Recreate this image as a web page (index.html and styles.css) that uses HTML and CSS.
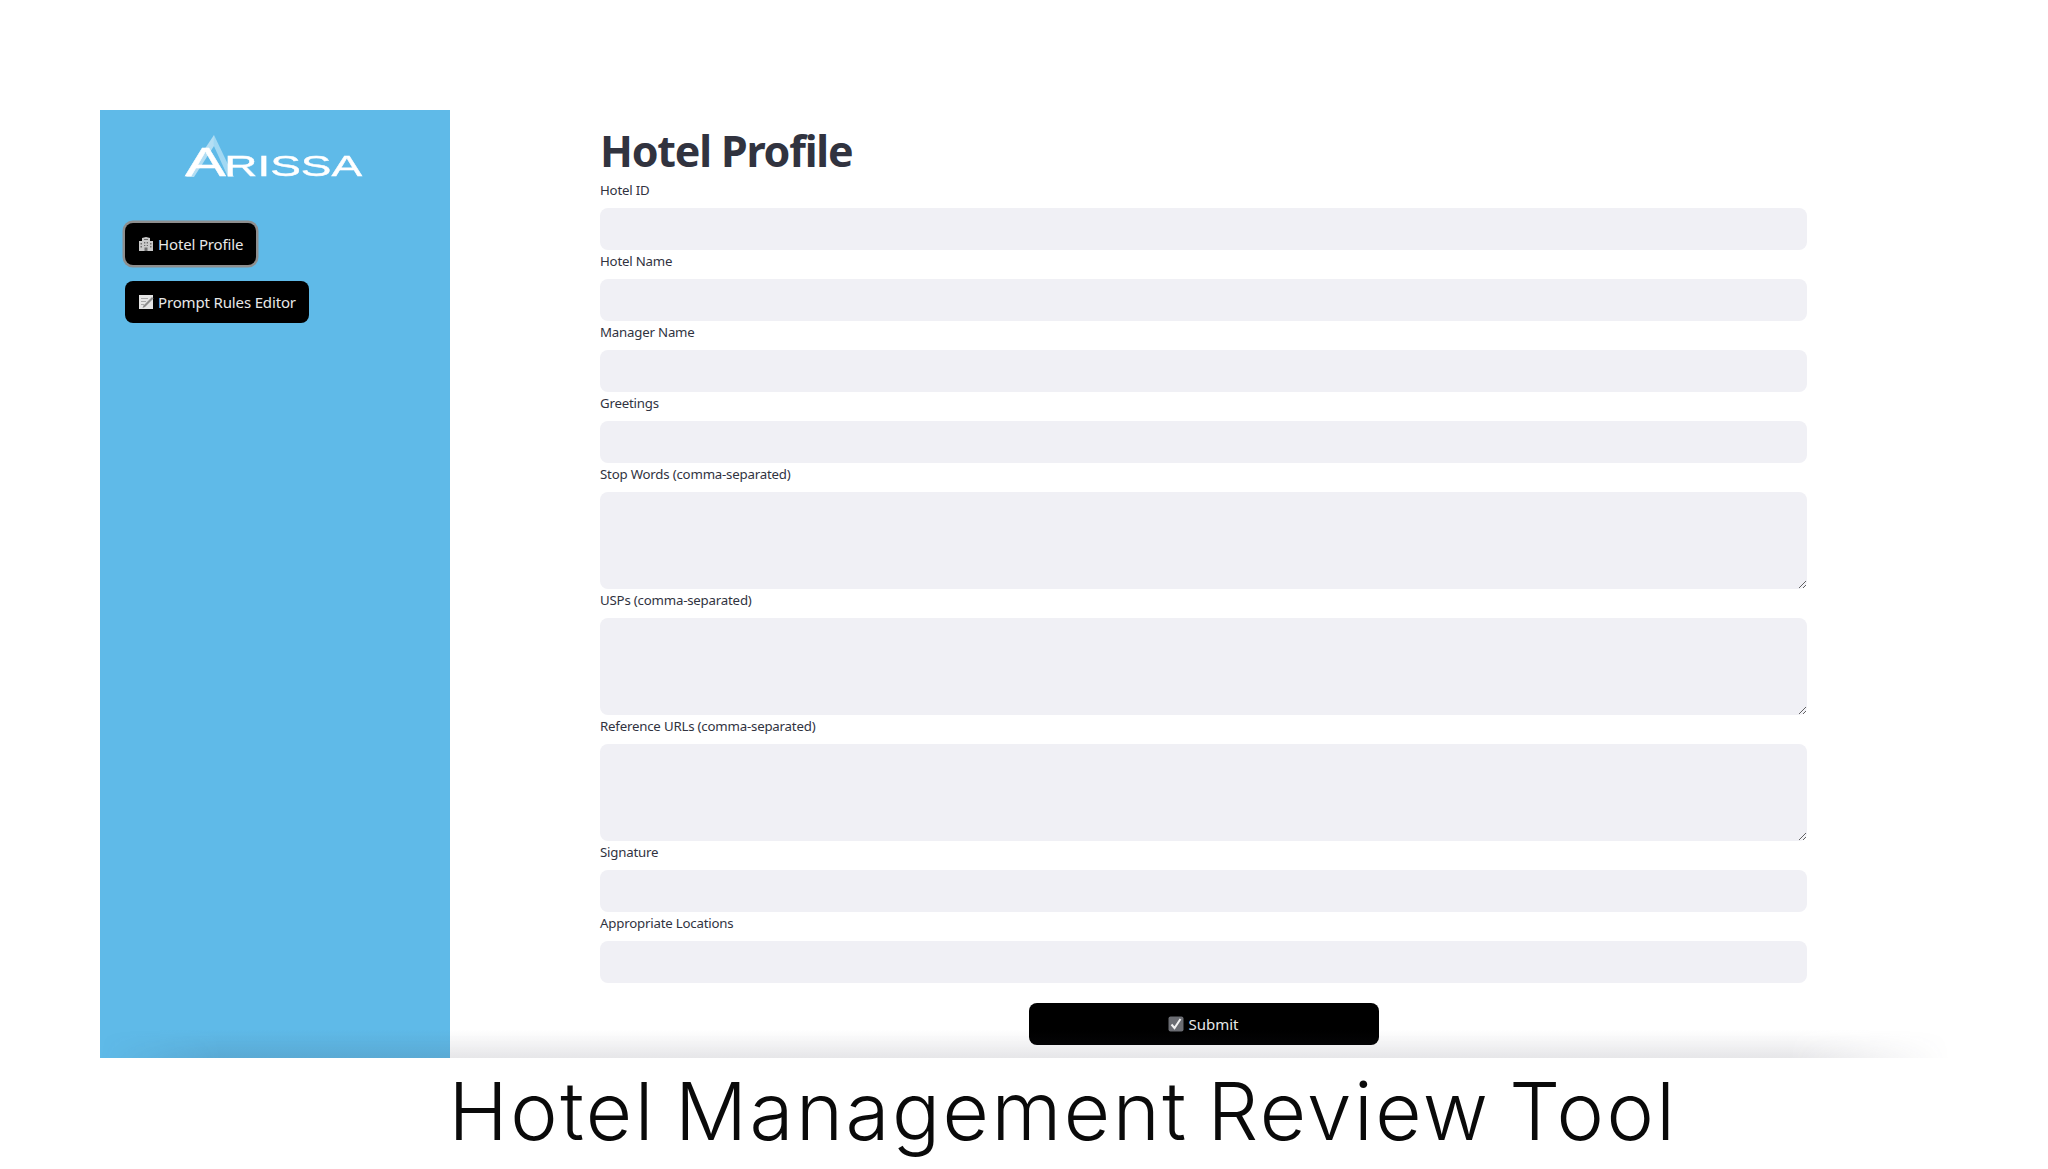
FILE: index.html
```html
<!DOCTYPE html>
<html lang="en">
<head>
<meta charset="utf-8">
<title>Hotel Management Review Tool</title>
<link rel="stylesheet" href="styles.css">
</head>
<body>
<div class="frame">
  <aside class="sidebar">
    <div class="logo">
      <svg class="logo-peak" width="60" height="44" viewBox="0 0 60 44" aria-hidden="true">
        <path d="M30 1 L2 43 L10 43 L30 12 Z" fill="#cfeaf8" opacity=".75"/>
        <path d="M30 1 L50 43 L44 43 L29 10 Z" fill="#a9dcf4" opacity=".9"/>
      </svg>
      <span class="logo-word"><span class="logo-cap">A</span>RISSA</span>
    </div>
    <nav class="nav">
      <button class="nav-btn is-active" type="button">
        <svg class="icon" viewBox="0 0 16 16" aria-hidden="true">
          <path fill="#c9c9c9" d="M1 5h3V2l4-1 4 1v3h3v10H1z"/>
          <path fill="#6f6f6f" d="M6 3h4v1H6zM2.500 7H4v1.500H2.500zM2.500 10H4v1.500H2.500zM12 7h1.500v1.500H12zM12 10h1.500v1.500H12zM6 6h1.300v1.500H6zM8.700 6H10v1.500H8.700zM6 9h1.300v1H6zM8.700 9H10v1H8.700zM6.500 11.500h3V15h-3z"/>
        </svg>
        Hotel Profile
      </button>
      <button class="nav-btn" type="button">
        <svg class="icon" viewBox="0 0 16 16" aria-hidden="true">
          <path fill="#e4e4e4" d="M1 1h14v14H1z"/>
          <path fill="#a8a8a8" d="M3 4h7v1H3zM3 7h5v1H3zM3 10h3v1H3z"/>
          <path fill="#8d8d8d" d="M14 3l1.500 1.500L7 13l-2.500 1 1-2.500z"/>
        </svg>
        Prompt Rules Editor
      </button>
    </nav>
  </aside>
  <main class="content">
    <h1 class="title">Hotel Profile</h1>
    <form class="form">
      <label class="field"><span class="label">Hotel ID</span><input class="input" type="text"></label>
      <label class="field"><span class="label">Hotel Name</span><input class="input" type="text"></label>
      <label class="field"><span class="label">Manager Name</span><input class="input" type="text"></label>
      <label class="field"><span class="label">Greetings</span><input class="input" type="text"></label>
      <label class="field"><span class="label">Stop Words (comma-separated)</span><textarea class="input area"></textarea></label>
      <label class="field"><span class="label">USPs (comma-separated)</span><textarea class="input area"></textarea></label>
      <label class="field"><span class="label">Reference URLs (comma-separated)</span><textarea class="input area"></textarea></label>
      <label class="field"><span class="label">Signature</span><input class="input" type="text"></label>
      <label class="field"><span class="label">Appropriate Locations</span><input class="input" type="text"></label>
      <button class="submit" type="button">
        <svg class="icon" viewBox="0 0 16 16" aria-hidden="true">
          <rect x="0.500" y="0.500" width="15" height="15" rx="2" fill="#6b6d73"/>
          <path d="M3.500 8.500l3 3.500 6-9" fill="none" stroke="#f2f2f2" stroke-width="2"/>
        </svg>
        Submit
      </button>
    </form>
  </main>
  <div class="fade" aria-hidden="true"></div>
</div>
<p class="caption">Hotel Management Review Tool</p>
</body>
</html>
```
FILE: styles.css
```css
* { box-sizing: border-box; }
html, body { margin: 0; height: 1169px; overflow: hidden; background: #fff; }
body { padding-top: 110px; font-family: "Noto Sans", "Liberation Sans", sans-serif; }

.frame {
  position: relative;
  display: flex;
  margin-left: 100px;
  height: 948px;
  width: 1850px;
}

.sidebar {
  flex: 0 0 350px;
  background: #5fbae8;
  padding: 25px 0 0 25px;
}

.logo {
  position: relative;
  height: 88px;
  margin-left: 60px;
}
.logo-peak { position: absolute; left: -1px; top: -1px; }
.logo-word {
  position: absolute;
  left: 0;
  top: 11px;
  color: #fff;
  font-family: "Liberation Sans", sans-serif;
  font-size: 30px;
  line-height: 32px;
  white-space: nowrap;
  transform: scaleX(1.53);
  transform-origin: left center;
  -webkit-text-stroke: 0.4px #fff;
}
.logo-cap { font-size: 40px; margin-right: -1px; }

.nav { display: flex; flex-direction: column; align-items: flex-start; gap: 16px; }

.nav-btn {
  display: flex;
  align-items: center;
  gap: 4px;
  height: 42px;
  padding: 0 13px;
  border: 0;
  border-radius: 8px;
  background: #000;
  color: #e8e8e8;
  font: 400 15px "Noto Sans", sans-serif;
  letter-spacing: -0.15px;
}
.nav-btn.is-active { box-shadow: 0 0 0 2.5px #8e8e8e; }

.icon { width: 16px; height: 16px; flex: none; }

.content { width: 1207px; margin-left: 150px; }

.title {
  margin: 0;
  height: 69px;
  padding-top: 16px;
  color: #31333f;
  font: 700 43px/50px "Noto Sans", sans-serif;
  letter-spacing: -1.2px;
}

.form { display: flex; flex-direction: column; }
.field { display: flex; flex-direction: column; }

.label {
  display: block;
  height: 29px;
  padding-top: 2px;
  color: #31333f;
  font-size: 13.25px;
  line-height: 19px;
  letter-spacing: -0.2px;
}

.input {
  display: block;
  width: 100%;
  height: 42px;
  border: 0;
  border-radius: 8px;
  background: #f0f0f5;
  outline: 0;
}
.area { height: 97px; resize: vertical; }

.submit {
  display: flex;
  align-items: center;
  justify-content: center;
  gap: 4px;
  align-self: center;
  width: 350px;
  height: 42px;
  margin-top: 20px;
  border: 0;
  border-radius: 8px;
  background: #000;
  color: #e8e8e8;
  font: 400 15px "Noto Sans", sans-serif;
}

.fade {
  position: absolute;
  left: 0;
  right: 0;
  bottom: 0;
  height: 28px;
  background: linear-gradient(to bottom, rgba(60, 60, 80, 0), rgba(60, 60, 80, .13));
  -webkit-mask-image: linear-gradient(to right, transparent 0, #000 120px, #000 1690px, transparent 100%);
  mask-image: linear-gradient(to right, transparent 0, #000 120px, #000 1690px, transparent 100%);
  pointer-events: none;
}

.caption {
  margin: 0 0 0 85px;
  width: 1956px;
  padding-top: 5px;
  text-align: center;
  color: #0a0a0a;
  font: 300 80px/96px "Inter", sans-serif;
  letter-spacing: 2.5px;
  word-spacing: -6px;
}
```
